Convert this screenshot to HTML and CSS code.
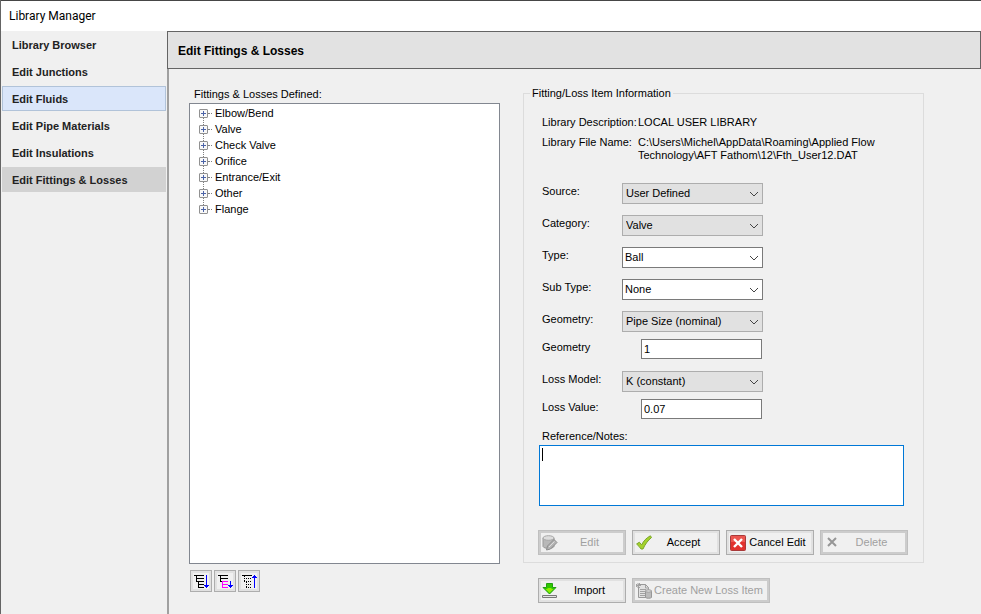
FILE: index.html
```html
<!DOCTYPE html>
<html lang="en">
<head>
<meta charset="utf-8">
<title>Library Manager</title>
<link rel="stylesheet" href="styles.css">
</head>
<body>
<header class="titlebar">Library Manager</header>
<div class="window">
  <nav class="sidebar">
    <a href="#browser">Library Browser</a>
    <a href="#junctions">Edit Junctions</a>
    <a href="#fluids" class="hovered">Edit Fluids</a>
    <a href="#pipes">Edit Pipe Materials</a>
    <a href="#insulations">Edit Insulations</a>
    <a href="#fittings" class="current">Edit Fittings &amp; Losses</a>
  </nav>
  <main class="main">
    <h1 class="heading">Edit Fittings &amp; Losses</h1>
    <div class="content">
      <section class="defined">
        <h2 class="caption">Fittings &amp; Losses Defined:</h2>
        <ul class="tree">
          <li><button class="expander" aria-label="Expand"></button>Elbow/Bend</li>
          <li><button class="expander" aria-label="Expand"></button>Valve</li>
          <li><button class="expander" aria-label="Expand"></button>Check Valve</li>
          <li><button class="expander" aria-label="Expand"></button>Orifice</li>
          <li><button class="expander" aria-label="Expand"></button>Entrance/Exit</li>
          <li><button class="expander" aria-label="Expand"></button>Other</li>
          <li><button class="expander" aria-label="Expand"></button>Flange</li>
        </ul>
        <div class="tools">
          <button class="tool" aria-label="Expand all">
            <svg viewBox="0 0 16 16" shape-rendering="crispEdges"><path fill="#000" d="M1 2h10v1H1zM3 3h1v6H3zM4 5h7v1H4zM3 8h8v1H3zM5 9h1v6H5zM6 11h5v1H6zM6 14h5v1H6z"/><path fill="#00f" d="M13 2h1v13h-1zM11 12h5v1h-5zM12 13h3v1h-3z"/></svg>
          </button>
          <button class="tool" aria-label="Expand branch">
            <svg viewBox="0 0 16 16" shape-rendering="crispEdges"><path fill="#000" d="M1 2h10v1H1zM3 3h1v6H3zM4 5h7v1H4zM3 8h8v1H3z"/><path fill="#f0f" d="M5 8h1v7H5zM6 8h5v1H6zM6 11h5v1H6zM6 14h5v1H6z"/><path fill="#00f" d="M13 8h1v7h-1zM11 12h5v1h-5zM12 13h3v1h-3z"/></svg>
          </button>
          <button class="tool" aria-label="Collapse all">
            <svg viewBox="0 0 16 16" shape-rendering="crispEdges"><path fill="#000" d="M1 2h10v1H1z"/><path stroke="#000" stroke-dasharray="1 1" d="M3.500 3v6M3 5.500h8M3 8.500h8M5.500 9v6M5 11.500h6M5 14.500h6"/><path fill="#00f" d="M13 2h1v13h-1zM12 3h3v1h-3zM11 4h5v1h-5z"/></svg>
          </button>
        </div>
      </section>
      <form class="editor">
        <fieldset class="group">
          <legend>Fitting/Loss Item Information</legend>
          <dl class="facts">
            <dt>Library Description:</dt><dd>LOCAL USER LIBRARY</dd>
            <dt>Library File Name:</dt><dd>C:\Users\Michel\AppData\Roaming\Applied Flow Technology\AFT Fathom\12\Fth_User12.DAT</dd>
          </dl>
          <div class="fields">
            <div class="row"><label for="source">Source:</label><span class="combo locked"><select id="source"><option>User Defined</option></select><svg viewBox="0 0 10 6"><path d="M1 1l4 4 4-4"/></svg></span></div>
            <div class="row"><label for="category">Category:</label><span class="combo locked"><select id="category"><option>Valve</option></select><svg viewBox="0 0 10 6"><path d="M1 1l4 4 4-4"/></svg></span></div>
            <div class="row"><label for="type">Type:</label><span class="combo"><select id="type"><option>Ball</option></select><svg viewBox="0 0 10 6"><path d="M1 1l4 4 4-4"/></svg></span></div>
            <div class="row"><label for="subtype">Sub Type:</label><span class="combo"><select id="subtype"><option>None</option></select><svg viewBox="0 0 10 6"><path d="M1 1l4 4 4-4"/></svg></span></div>
            <div class="pair">
              <div class="row"><label for="geometry">Geometry:</label><span class="combo locked"><select id="geometry"><option>Pipe Size (nominal)</option></select><svg viewBox="0 0 10 6"><path d="M1 1l4 4 4-4"/></svg></span></div>
              <div class="row"><label for="size">Geometry</label><input id="size" type="text" value="1"></div>
            </div>
            <div class="pair">
              <div class="row"><label for="model">Loss Model:</label><span class="combo locked"><select id="model"><option>K (constant)</option></select><svg viewBox="0 0 10 6"><path d="M1 1l4 4 4-4"/></svg></span></div>
              <div class="row"><label for="value">Loss Value:</label><input id="value" type="text" value="0.07"></div>
            </div>
          </div>
          <label class="notes-label" for="notes">Reference/Notes:</label>
          <div class="notes"><textarea id="notes"></textarea><span class="caret"></span></div>
          <div class="actions">
            <button type="button" class="btn" disabled>
              <svg viewBox="0 0 16 16"><path fill="#b8b8b8" stroke="#999" d="M1 3v8.500c1 2.500 10 2.500 11 0V3"/><ellipse cx="6.500" cy="3" rx="5.500" ry="2.300" fill="#ddd" stroke="#a5a5a5"/><path fill="#b4b4b4" stroke="#8c8c8c" d="M4.500 15l1-4 6.500-6.500 3 3-6.500 6.500z"/><path stroke="#ddd" d="M7 12l5.500-5.500"/></svg>
              <span>Edit</span></button>
            <button type="button" class="btn">
              <svg viewBox="0 0 16 16"><path fill="#a4d22c" stroke="#7ba52c" stroke-linejoin="round" d="M.6 9l2.700-1.800 2.400 2.600C7.500 6 10.500 2.800 14.400.8l1.100 1.700C11.800 5.500 9 9.500 7 14H5C4 12.500 2.500 10.500.6 9z"/></svg>
              <span>Accept</span></button>
            <button type="button" class="btn">
              <svg viewBox="0 0 16 16"><rect x=".5" y=".5" width="15" height="15" rx="1" fill="#e2312d" stroke="#a83a3a"/><path fill="#ec5650" d="M1 1h14v6H1z"/><path stroke="#fff" stroke-width="2.400" d="M4 4l8 8M12 4l-8 8"/></svg>
              <span>Cancel Edit</span></button>
            <button type="button" class="btn" disabled>
              <svg viewBox="0 0 16 16"><path stroke="#969696" stroke-width="2" d="M4 3l8 8M12 3l-8 8"/></svg>
              <span>Delete</span></button>
          </div>
        </fieldset>
        <div class="actions extra">
          <button type="button" class="btn">
            <svg viewBox="0 0 16 16"><path fill="#2fc800" stroke="#22a010" d="M4.500.5h6v4h3.500L7.500 11 1 4.500h3.500z"/><path fill="#8fee00" d="M5.500 5h4v1h2l-4 4-4-4h2z"/><path fill="#e4e4e4" stroke="#777" d="M.5 12.500h14v2H.5z"/></svg>
            <span>Import</span></button>
          <button type="button" class="btn wide" disabled>
            <svg viewBox="0 0 16 16"><path fill="#e2e2e2" stroke="#999" d="M2.500 1.500h7l3 3v10h-10z"/><path fill="none" stroke="#a2a2a2" d="M9.500 1v4H13M4 6.500h6M4 8.500h5M4 10.500h5M4 12.500h5M0 1l4 4M4 0L0 4M2 0v5M0 2.500h5"/><path fill="#bbb" stroke="#979797" d="M9.500 8v6.500c1 1 5 1 6 0V8z"/><ellipse cx="12.500" cy="8" rx="3" ry="1.300" fill="#d5d5d5" stroke="#a2a2a2"/></svg>
            <span>Create New Loss Item</span></button>
        </div>
      </form>
    </div>
  </main>
</div>
</body>
</html>
```
FILE: styles.css
```css
* { box-sizing: border-box; }

body {
  margin: 0;
  min-height: 100vh;
  display: flex;
  flex-direction: column;
  background: #f0f0f0;
  border-left: 1px solid #646464;
  color: #000;
  font: 11px/13px "Liberation Sans", Arial, sans-serif;
}

button, input, select, textarea { font: inherit; color: inherit; margin: 0; }

.titlebar {
  height: 31px;
  padding: 0 8px;
  border-top: 1px solid #464646;
  background: #fff;
  font: 12px/30px Roboto, sans-serif;
}

.window { flex: 1; display: flex; }

.sidebar {
  flex: 0 0 166px;
  display: flex;
  flex-direction: column;
  gap: 2px;
  padding: 1px 1px 0;
}
.sidebar a {
  height: 25px;
  padding: 0 9px;
  border: 1px solid transparent;
  color: #222;
  font-weight: bold;
  line-height: 24px;
  text-decoration: none;
}
.sidebar .hovered { background: #dae6fa; border-color: #b1c3d9; }
.sidebar .current { background: #d2d2d2; }

.main { flex: 1; display: flex; flex-direction: column; border-left: 2px solid #a0a0a0; }

.heading {
  margin: 0 0 0 -2px;
  height: 38px;
  padding: 0 10px;
  border: 1px solid #646464;
  background: #e2e2e2;
  font-size: 12px;
  line-height: 38px;
}

.content {
  flex: 1;
  display: grid;
  grid-template-columns: 311fr 401fr;
  gap: 23px;
  padding: 18px 57px 11px 20px;
}

.defined { display: flex; flex-direction: column; }
.caption { margin: 1px 0 2px 5px; font-size: 11px; font-weight: normal; }

.tree {
  flex: 1;
  margin: 0;
  padding: 1px 9px;
  border: 1px solid #828790;
  background: #fff;
  list-style: none;
}
.tree li { position: relative; display: flex; align-items: center; gap: 7px; height: 16px; }
.tree li::before {
  content: "";
  position: absolute;
  left: 9px;
  top: 8px;
  width: 4px;
  border-top: 1px dotted #808080;
}
.tree li:not(:last-child)::after {
  content: "";
  position: absolute;
  left: 4px;
  top: 13px;
  height: 7px;
  border-left: 1px dotted #808080;
}
.expander {
  width: 9px;
  height: 9px;
  padding: 0;
  border: 1px solid #919191;
  border-radius: 1px;
  background:
    linear-gradient(#4b63a7, #4b63a7) center / 5px 1px no-repeat,
    linear-gradient(#4b63a7, #4b63a7) center / 1px 5px no-repeat,
    #f8f8f8;
}

.tools { display: flex; gap: 2px; padding: 6px 1px 11px; }
.tool {
  width: 22px;
  height: 22px;
  padding: 2px;
  border: 1px solid #adadad;
  background: linear-gradient(#f0f0f0, #f0f0f0) center / 16px 16px no-repeat, #e1e1e1;
}
.tool svg { display: block; width: 16px; height: 16px; }

.group { margin: 0; padding: 16px 14px 7px; border: 1px solid #dcdcdc; min-width: 0; }
.group legend { margin-left: -8px; padding: 0 2px; }

.facts {
  display: grid;
  grid-template-columns: 90px 1fr;
  gap: 7px 6px;
  margin: 0 20px 21px 4px;
}
.facts dt { white-space: nowrap; }
.facts dd { margin: 0; }

.fields { display: flex; flex-direction: column; gap: 11px; margin-left: 4px; }
.pair { display: flex; flex-direction: column; gap: 7px; }
.row { display: grid; grid-template-columns: 80px 141px; height: 21px; }
.row label { padding-top: 2px; }
.row input {
  height: 20px;
  margin: 0 1px 0 19px;
  padding: 0 2px;
  border: 1px solid #7a7a7a;
  background: #fff;
  min-width: 0;
}
.combo { position: relative; display: flex; }
.combo select {
  flex: 1;
  appearance: none;
  padding: 0 2px;
  border: 1px solid #7a7a7a;
  border-radius: 0;
  background: #fff;
}
.combo.locked select { padding: 0 3px; border-color: #adadad; background: #e1e1e1; }
.combo svg {
  position: absolute;
  right: 4px;
  top: 8px;
  width: 10px;
  height: 6px;
  fill: none;
  stroke: #444;
  pointer-events: none;
}

.notes-label { display: block; margin: 10px 0 2px 4px; }
.notes { position: relative; margin: 0 5px 24px 1px; }
.notes textarea {
  display: block;
  width: 100%;
  height: 61px;
  padding: 2px;
  border: 1px solid #0078d7;
  outline: 0;
  resize: none;
  background: #fff;
}
.caret { position: absolute; left: 3px; top: 3px; width: 1px; height: 13px; background: #000; }

.actions { display: flex; gap: 6px; }
.extra { padding: 15px 15px 0; }
.btn {
  display: flex;
  align-items: center;
  flex: 0 0 88px;
  height: 25px;
  padding: 0 4px 0 1px;
  border: 1px solid #adadad;
  background: #f0f0f0;
  box-shadow: inset 0 0 0 2px #e1e1e1;
  white-space: nowrap;
}
.btn svg { flex: none; width: 16px; height: 16px; margin-left: 2px; fill: none; }
.btn span { flex: 1; text-align: center; }
.btn:disabled { border-color: #bfbfbf; box-shadow: inset 0 0 0 2px #ccc; color: #a0a0a0; }
.wide { flex-basis: 138px; }
```
